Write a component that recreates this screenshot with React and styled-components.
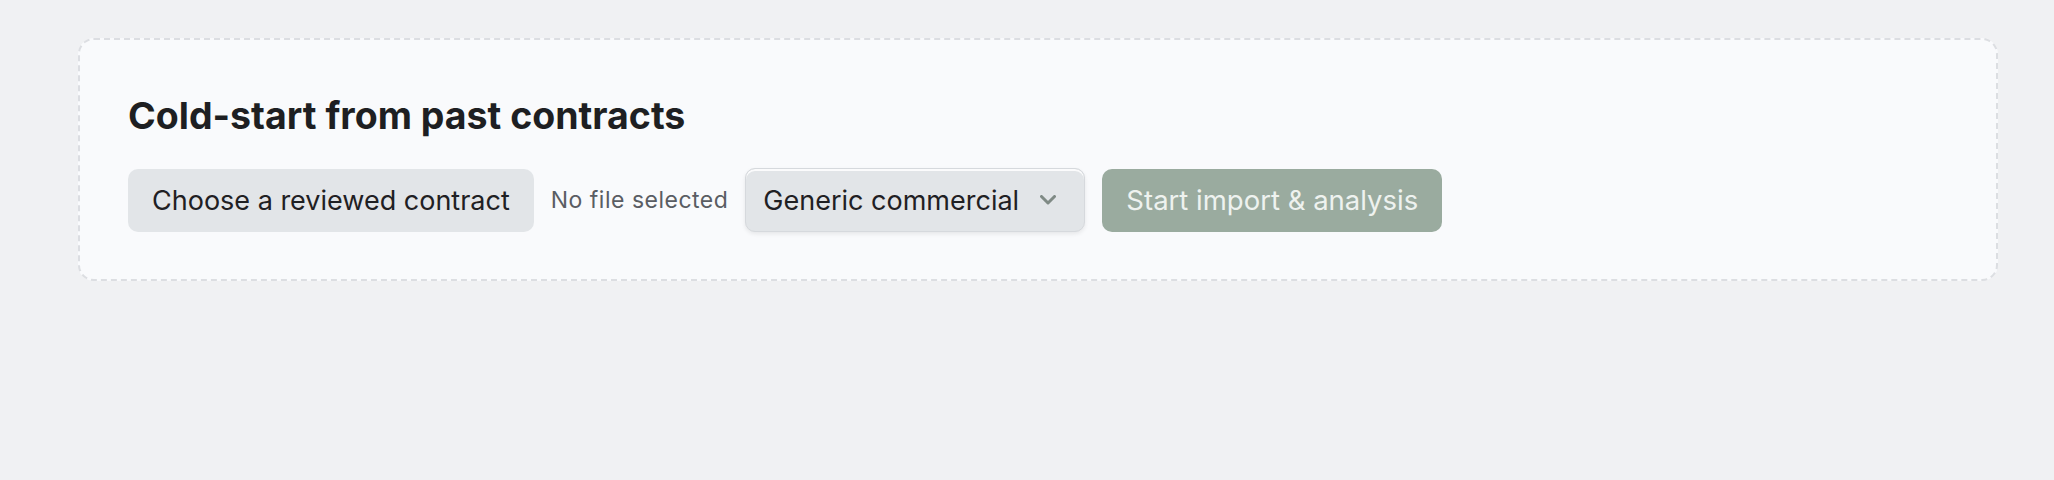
import styled, { createGlobalStyle } from 'styled-components';

const GlobalStyle = createGlobalStyle`
  body {
    margin: 0;
    background: #f0f1f3;
    font-family: Inter, "Noto Sans", sans-serif;
  }
`;

const Page = styled.div`
  padding: 38px 0 0 78px;
  min-height: 480px;
  box-sizing: border-box;
`;

const Card = styled.section`
  width: 1920px;
  box-sizing: border-box;
  padding: 48px 48px 47px 48px;
  background: #f9fafc;
  border: 2px dashed #dcdee2;
  border-radius: 16px;
`;

const Title = styled.h2`
  margin: 0 0 25px;
  font-size: 37.5px;
  line-height: 55px;
  font-weight: 700;
  color: #1e1f22;
`;

const Row = styled.div`
  display: flex;
  align-items: center;
  gap: 17px;
`;

const Button = styled.button`
  height: 63px;
  padding: 0 24px;
  border: none;
  border-radius: 10px;
  font-family: inherit;
  font-size: ${(p) => (p.$primary ? '27.5px' : '27px')};
  background: ${(p) => (p.$primary ? '#9aab9f' : '#e2e5e8')};
  color: ${(p) => (p.$primary ? '#eef2ef' : '#1f2023')};
  cursor: ${(p) => (p.$primary ? 'not-allowed' : 'pointer')};
`;

const FileName = styled.span`
  font-size: 23px;
  letter-spacing: 0.5px;
  color: #5a5d63;
`;

const SelectBox = styled.button`
  display: flex;
  align-items: center;
  justify-content: space-between;
  width: 340px;
  height: 64px;
  padding: 0 28px 0 17px;
  box-sizing: border-box;
  border: 1px solid #d6d9dd;
  border-radius: 10px;
  background: #e2e5e8;
  box-shadow: inset 0 2px 0 rgba(255, 255, 255, 0.85), 0 2px 4px rgba(0, 0, 0, 0.08);
  font-family: inherit;
  font-size: 27px;
  color: #1f2023;
`;

const Chevron = () => (
  <svg width="16" height="10" viewBox="0 0 16 10" fill="none">
    <path d="M1.5 1.5 L8 8 L14.5 1.5" stroke="#7f8a85" strokeWidth="3" strokeLinecap="round" strokeLinejoin="round" />
  </svg>
);

export default function App() {
  return (
    <Page>
      <GlobalStyle />
      <Card>
        <Title>Cold-start from past contracts</Title>
        <Row>
          <Button>Choose a reviewed contract</Button>
          <FileName>No file selected</FileName>
          <SelectBox>
            <span>Generic commercial</span>
            <Chevron />
          </SelectBox>
          <Button $primary disabled>Start import &amp; analysis</Button>
        </Row>
      </Card>
    </Page>
  );
}
